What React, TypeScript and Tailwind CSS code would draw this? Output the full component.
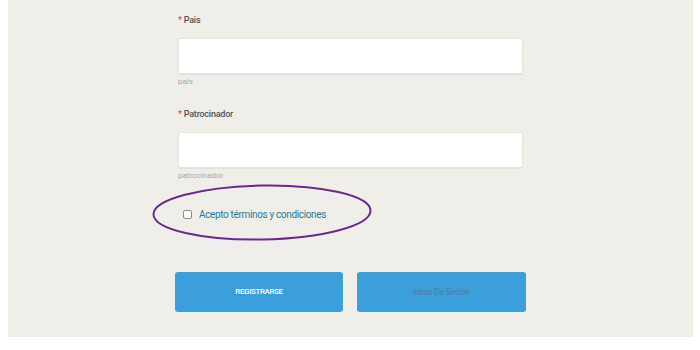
import React from "react";

export default function App() {
  return (
    <div className="w-[700px] h-[350px] bg-white relative overflow-hidden" style={{ fontFamily: "Roboto, 'Liberation Sans', sans-serif" }}>
      <div className="ml-[8px] w-[685px] h-[337px] bg-[#efeee9] pl-[162px] pt-[14px]">
        <div className="w-[345px] ml-[8px]">
          <div className="text-[9px] font-medium text-[#555] tracking-tight leading-[12px]">
            <span className="text-[#e0474c]">*</span> Pais
          </div>
          <div className="mt-[12px] h-[36px] bg-white border border-[#e4e3de] rounded-[2px] shadow-[0_1px_1px_rgba(0,0,0,0.06)]" />
          <div className="mt-[3px] text-[8px] text-[#a8a8a8] leading-[10px]">pais</div>
          <div className="mt-[21px] text-[9px] font-medium text-[#555] tracking-tight leading-[12px]">
            <span className="text-[#e0474c]">*</span> Patrocinador
          </div>
          <div className="mt-[12px] h-[36px] bg-white border border-[#e4e3de] rounded-[2px] shadow-[0_1px_1px_rgba(0,0,0,0.06)]" />
          <div className="mt-[3px] text-[8px] text-[#a8a8a8] leading-[10px]">patrocinador</div>
          <div className="relative mt-[26px] flex items-center h-[14px] ml-[5px]">
            <div className="w-[9px] h-[9px] border border-[#8a8a8a] rounded-[2px] bg-white" />
            <span className="ml-[7px] text-[10px] text-[#2a7b94] tracking-[-0.35px]">Acepto términos y condiciones</span>
            <svg className="absolute left-[-32px] top-[-24px]" width="224" height="62" viewBox="0 0 224 62">
              <ellipse cx="111" cy="29.5" rx="108.5" ry="27" fill="none" stroke="#6a2a8c" strokeWidth="2" transform="rotate(-1 111 29.5)" />
            </svg>
          </div>
        </div>
        <div className="mt-[51px] flex gap-[14px] ml-[5px]">
          <button className="w-[168px] h-[40px] bg-[#3b9fdb] rounded-[3px] text-white text-[8px] font-medium tracking-[-0.4px]">REGISTRARSE</button>
          <button className="w-[169px] h-[40px] bg-[#3b9fdb] rounded-[3px] text-[#4a7ea6] text-[8.5px] tracking-[-0.2px]">Inicio De Sesión</button>
        </div>
      </div>
    </div>
  );
}
